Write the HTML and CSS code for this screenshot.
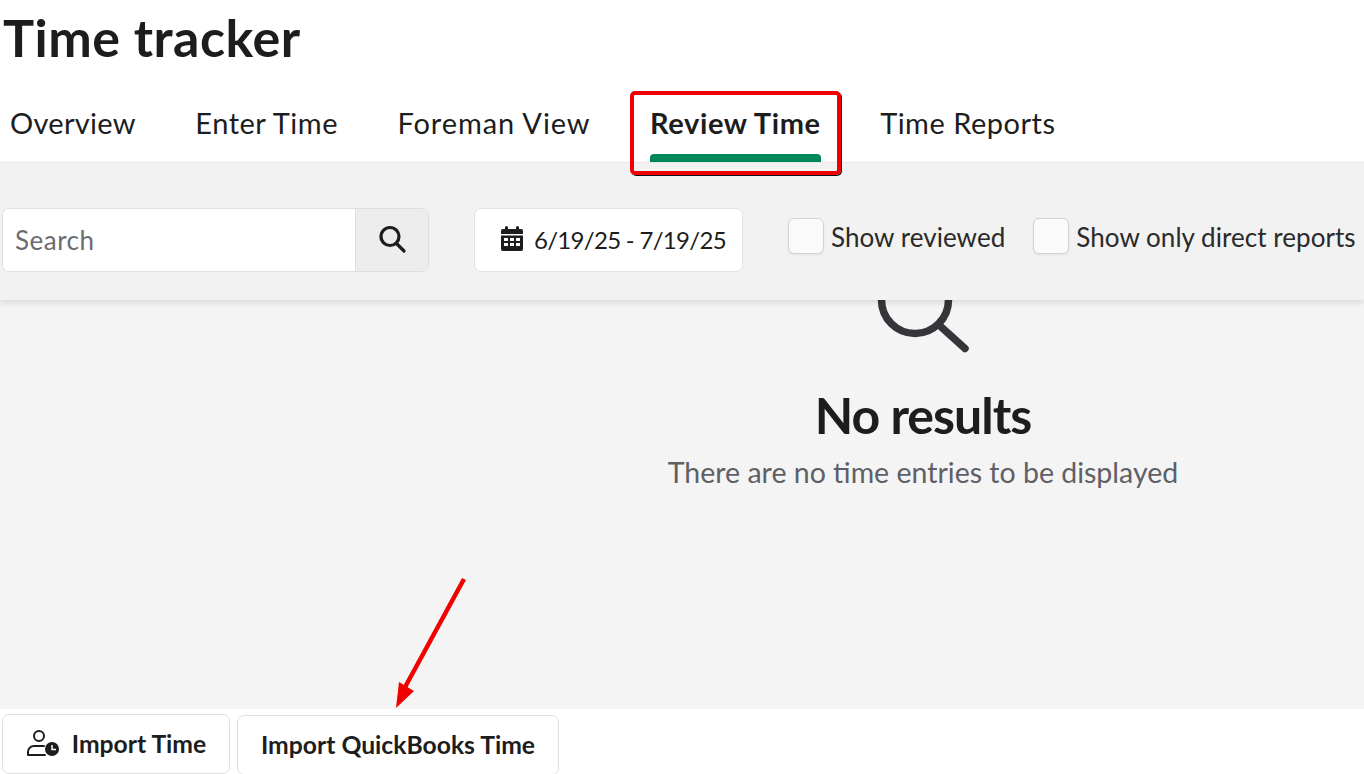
FILE: index.html
```html
<!DOCTYPE html>
<html lang="en">
<head>
  <meta charset="UTF-8" />
  <title>Time tracker</title>
  <link rel="stylesheet" href="styles.css">
</head>
<body>
  <header class="page-header">
    <h1 class="page-title">Time tracker</h1>
    <nav class="tabs">
      <a class="tab tab-tight">Overview</a>
      <a class="tab">Enter Time</a>
      <a class="tab tab-wide">Foreman View</a>
      <a class="tab active">Review Time</a>
      <a class="tab">Time Reports</a>
    </nav>
  </header>

  <main class="content">
    <div class="filter-bar">
      <div class="search-box">
        <input class="search-input" type="text" placeholder="Search" />
        <button class="search-button" aria-label="Search">
          <svg width="30" height="30" viewBox="0 0 30 30" fill="none" stroke="#1d1d1d" stroke-width="3.2">
            <circle cx="13" cy="12.500" r="9" />
            <path d="M19.500 19.500l7.500 7.500" stroke-linecap="round" />
          </svg>
        </button>
      </div>
      <div class="date-range">
        <svg class="calendar-icon" width="24" height="26" viewBox="0 0 24 26" fill="#1d1d1d">
          <path d="M5 1.500a1.500 1.500 0 0 1 3 0V3h8V1.500a1.500 1.500 0 0 1 3 0V3h2a2 2 0 0 1 2 2v3H1V5a2 2 0 0 1 2-2h2z" />
          <path fill-rule="evenodd" d="M1 9.500h22V23a2 2 0 0 1-2 2H3a2 2 0 0 1-2-2zM4 12v3h4v-3zm6 0v3h4v-3zm6 0v3h4v-3zM4 17v3h4v-3zm6 0v3h4v-3zm6 0v3h4v-3z" />
        </svg>
        <span>6/19/25 - 7/19/25</span>
      </div>
      <label class="check check-reviewed"><span class="check-box"></span><span class="check-label">Show reviewed</span></label>
      <label class="check"><span class="check-box"></span><span class="check-label">Show only direct reports</span></label>
    </div>

    <section class="empty-state">
      <svg class="empty-icon" width="100" height="53" viewBox="0 0 100 53" fill="none" stroke="#36363a" stroke-width="7.500">
        <circle cx="42" cy="0" r="33.500" />
        <path d="M66 25l26 23.500" stroke-linecap="round" />
      </svg>
      <h2 class="empty-title">No results</h2>
      <p class="empty-text">There are no time entries to be displayed</p>
    </section>
  </main>

  <footer class="actions">
    <button class="action-button first">
      <svg width="34" height="28" viewBox="0 0 34 28" fill="none" stroke="#1d1d1d" stroke-width="2">
        <circle cx="13" cy="7" r="5" />
        <path d="M2 26v-3a6 6 0 0 1 6-6h10M2 26h17" stroke-linecap="round" />
        <circle cx="26" cy="20" r="7" fill="#1d1d1d" stroke="none" />
        <path d="M26 16v4.500h4" stroke="#fff" stroke-width="1.500" />
      </svg>
      Import Time
    </button>
    <button class="action-button second">Import QuickBooks Time</button>
  </footer>

  <!-- annotations drawn over the screenshot -->
  <div class="callout"></div>
  <svg class="arrow" width="80" height="140" viewBox="0 0 80 140">
    <path d="M71 2L11 112" stroke="#f00000" stroke-width="4.500" />
    <path d="M3 131L6 105l15 9z" fill="#f00000" />
  </svg>
</body>
</html>
```

FILE: styles.css
```css
* {
  box-sizing: border-box;
}

body {
  margin: 0;
  font-family: 'Lato', sans-serif;
  color: #1d1d1d;
  background-color: #fff;
  display: flex;
  flex-direction: column;
  height: 774px;
  overflow: hidden;
  position: relative;
}

.page-header {
  flex: none;
  height: 162px;
  display: flex;
  flex-direction: column;
}

.page-title {
  margin: 0;
  padding: 9px 0 0 3px;
  font-size: 52px;
  line-height: 56px;
  font-weight: 700;
  letter-spacing: 0.5px;
}

.tabs {
  display: flex;
  gap: 19.500px;
  margin-top: 25px;
}

.tab {
  height: 72px;
  padding: 15px 10px 0;
  font-size: 29px;
  line-height: 36px;
  letter-spacing: 0.5px;
  white-space: nowrap;
  position: relative;
  margin-right: 20px;
}

.tab-tight {
  letter-spacing: 0.3px;
}

.tab-wide {
  letter-spacing: 0.9px;
}

.tab.active {
  font-weight: 700;
  letter-spacing: 0.6px;
}

.tab.active::after {
  content: "";
  position: absolute;
  left: 10px;
  right: 10px;
  bottom: 0;
  height: 8px;
  background-color: #00875a;
  border-radius: 4px 4px 0 0;
}

.content {
  flex: none;
  height: 547px;
  background-color: #f4f4f4;
}

.filter-bar {
  height: 138px;
  background-color: #f2f2f2;
  border-top: 1px solid #e8e8e8;
  box-shadow: 0 3px 6px rgba(0, 0, 0, 0.1);
  display: flex;
  align-items: flex-start;
  padding: 45px 0 0 2px;
  position: relative;
}

.search-box {
  width: 427px;
  height: 64px;
  display: flex;
  border: 1px solid #dfdfe3;
  border-radius: 7px;
  overflow: hidden;
  background-color: #fff;
}

.search-input {
  flex: 1;
  min-width: 0;
  border: none;
  outline: none;
  padding: 0 12px;
  font-family: inherit;
  font-size: 26px;
  letter-spacing: 0.5px;
}

.search-input::placeholder {
  color: #6b6c72;
  opacity: 1;
}

.search-button {
  width: 73px;
  border: none;
  border-left: 1px solid #dfdfe3;
  background-color: #ededed;
  display: flex;
  align-items: center;
  justify-content: center;
  padding: 0 0 2px;
}

.date-range {
  margin-left: 45px;
  width: 269px;
  height: 64px;
  background-color: #fff;
  border: 1px solid #e3e3e7;
  border-radius: 7px;
  display: flex;
  align-items: center;
  gap: 10px;
  padding: 0 0 2px 25px;
  font-size: 24px;
  letter-spacing: -0.7px;
  white-space: nowrap;
}

.calendar-icon {
  flex: none;
}

.check {
  display: flex;
  align-items: center;
  gap: 7px;
  height: 36px;
  margin-top: 10px;
  margin-left: 28px;
  font-size: 26px;
  letter-spacing: 0.05px;
  color: #2a2a2a;
  white-space: nowrap;
}

.check-reviewed {
  margin-left: 45px;
}

.check-label {
  position: relative;
  top: 1px;
}

.check-box {
  width: 36px;
  height: 36px;
  background-color: #fafafa;
  border: 1px solid #d4d4d4;
  border-radius: 6px;
  box-shadow: 0 1px 2px rgba(0, 0, 0, 0.08);
}

.empty-state {
  display: flex;
  flex-direction: column;
  align-items: center;
  padding-left: 482px;
}

.empty-icon {
  display: block;
}

.empty-title {
  margin: 32px 0 0;
  font-size: 50px;
  line-height: 60px;
  font-weight: 700;
  letter-spacing: -1px;
}

.empty-text {
  margin: 9px 0 0;
  font-size: 28.500px;
  line-height: 36px;
  color: #5f6066;
}

.actions {
  flex: none;
  height: 65px;
  display: flex;
  align-items: flex-start;
  gap: 7px;
  padding-left: 2px;
}

.action-button {
  height: 60px;
  background-color: #fff;
  border: 1px solid #dfdfe3;
  border-radius: 7px;
  font-family: inherit;
  font-size: 24.700px;
  font-weight: 700;
  color: #1d1d1d;
  display: flex;
  align-items: center;
  justify-content: center;
  white-space: nowrap;
  padding-bottom: 3px;
}

.action-button.first {
  margin-top: 5px;
  width: 228px;
  gap: 12px;
}

.action-button.second {
  margin-top: 6px;
  width: 322px;
}

.callout {
  position: absolute;
  left: 630px;
  top: 91px;
  width: 211px;
  height: 84px;
  border: 4px solid #f00000;
  border-radius: 5px;
  box-shadow: 1px 1px 0 #111;
}

.arrow {
  position: absolute;
  left: 393px;
  top: 577px;
}
```
